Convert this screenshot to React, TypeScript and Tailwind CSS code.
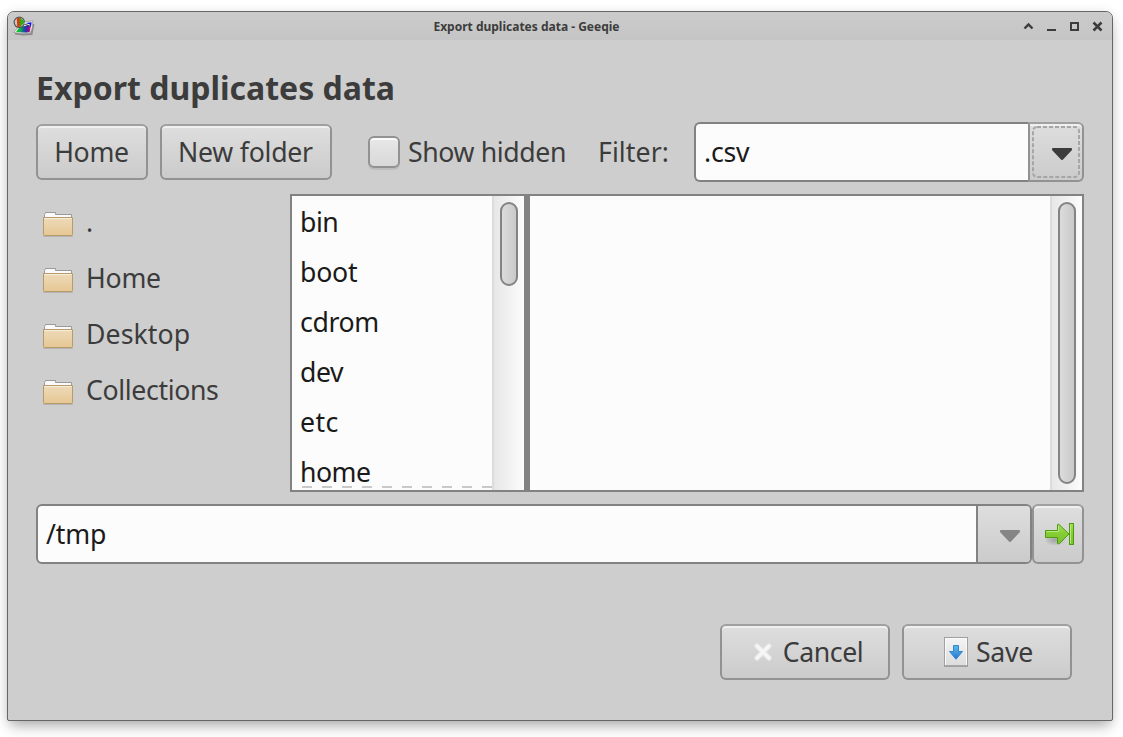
import type { ReactNode } from "react";

const raised =
  "border-2 border-[#929292] border-t-[#a0a0a0] rounded-[6px] bg-linear-to-b from-[#dedede] to-[#cbcbcb] shadow-[inset_0_2px_0_#f0f0f0]";

function Button({ className, children }: { className: string; children: ReactNode }) {
  return (
    <button type="button" className={`flex h-14 shrink-0 items-center justify-center whitespace-nowrap ${raised} ${className}`}>
      {children}
    </button>
  );
}

function AppIcon() {
  return (
    <svg width="22" height="20" viewBox="0 0 22 20" className="shrink-0">
      <defs>
        <linearGradient id="spectrum" x1="0" y1="0" x2="1" y2="0">
          <stop offset="0" stopColor="#14c81e" />
          <stop offset="0.3" stopColor="#0cae4a" />
          <stop offset="0.52" stopColor="#0c5c9c" />
          <stop offset="0.72" stopColor="#4a1cb0" />
          <stop offset="1" stopColor="#e6145a" />
        </linearGradient>
      </defs>
      <path d="M2 17.500 L10 18.500 L18.500 18 L20.500 8" fill="none" stroke="#6c6c6c" strokeWidth="2" opacity=".65" />
      <path d="M.5 16.500 L5 11.500 L12 6 L19.800 4.800 Q20 12 17.500 16.800 Q9 18.200 .5 16.500Z" fill="#ededed" stroke="#858585" strokeWidth=".6" />
      <path d="M3 15.700 L7 10.800 L18 9 L16.700 16 Q9 17.200 3 15.700Z" fill="url(#spectrum)" />
      <path d="M13 7 L18.600 6.200 L18 10.500 L14 10.500Z" fill="#1414dc" />
      <circle cx="6.300" cy="6.300" r="5.200" fill="#c9c9c4" stroke="#555" strokeWidth="1.200" />
      <path d="M3.800 2.300 L7.500 1.800 V11 L4.200 10.800Z" fill="#d8380c" />
      <path d="M7 1.800 L12 5.800 L7 11Z" fill="#1fb414" />
      <path d="M6.200 2 H7.600 V10.800 H6.200Z" fill="#8a7408" />
      <path d="M11 7.600 L17 9.800" stroke="#555" strokeWidth="1.400" />
      <path d="M11 7 L17 9" stroke="#dcdcdc" strokeWidth="1" />
    </svg>
  );
}

function WindowControls() {
  return (
    <svg width="82" height="12" viewBox="0 0 82 12" fill="none" stroke="#3c3c3c" strokeWidth="2" className="shrink-0">
      <path d="M1.500 8.500 L5.500 4.500 L9.500 8.500" strokeWidth="2.400" />
      <path d="M24 10 H33" />
      <rect x="48" y="3" width="7" height="7" />
      <path d="M70.500 2.500 L78.500 10.500 M78.500 2.500 L70.500 10.500" strokeWidth="2.500" />
    </svg>
  );
}

function FolderIcon() {
  return (
    <svg width="32" height="26" viewBox="0 0 32 26" className="mt-1 shrink-0">
      <defs>
        <linearGradient id="folder" x1="0" y1="0" x2="0" y2="1">
          <stop offset="0" stopColor="#eedabb" />
          <stop offset="1" stopColor="#e6c793" />
        </linearGradient>
      </defs>
      <path d="M1 24.500 H31" stroke="#b5b5b5" />
      <path d="M2.500 9 V2.500 L3.500 .5 H13.500 V2.500 H29.500 V9Z" fill="#fafafa" stroke="#999" />
      <path d="M1.500 5.500 H30.500 V22.500 Q30.500 23.500 29.500 23.500 H2.500 Q1.500 23.500 1.500 22.500Z" fill="url(#folder)" stroke="#b79b6b" />
      <path d="M2.500 6.500 H29.500" stroke="#f8edd9" />
    </svg>
  );
}

function Caret({ className }: { className: string }) {
  return (
    <svg width="20" height="12" viewBox="0 0 20 12" className={className}>
      <path d="M1 0 H19 Q20 0 20 1 V2 L11.500 11 Q10 12.800 8.500 11 L0 2 V1 Q0 0 1 0Z" fill="currentColor" />
    </svg>
  );
}

function FocusRing() {
  return (
    <svg width="48" height="52" viewBox="0 0 48 52" className="absolute top-[2px] left-[2px]">
      <rect x="1" y="1" width="46" height="50" rx="4" fill="none" stroke="#a6a6a6" strokeWidth="2" strokeDasharray="4 2" />
    </svg>
  );
}

function JumpIcon() {
  return (
    <svg width="34" height="26" viewBox="0 0 34 26" className="ml-1">
      <defs>
        <linearGradient id="jump" x1="0" y1="0" x2="0" y2="1">
          <stop offset="0" stopColor="#a0df55" />
          <stop offset="0.5" stopColor="#85cc33" />
          <stop offset="1" stopColor="#75c42a" />
        </linearGradient>
        <radialGradient id="jumpShade">
          <stop offset="0" stopColor="#777" stopOpacity=".55" />
          <stop offset="1" stopColor="#777" stopOpacity="0" />
        </radialGradient>
      </defs>
      <ellipse cx="12" cy="19" rx="11" ry="6" fill="url(#jumpShade)" />
      <path d="M2.500 9.500 H14.500 V3.500 Q15 2.800 16 3.500 L26 13 L16 22.800 Q15 23.200 14.500 22.500 V16.500 H2.500Z" fill="url(#jump)" stroke="#4f9a12" />
      <path d="M3.500 10.500 H15.500 V5" fill="none" stroke="#b9ea80" />
      <rect x="26.500" y="2.500" width="4" height="21" fill="url(#jump)" stroke="#4f9a12" />
      <path d="M27.500 3.500 V22.500" stroke="#b9ea80" />
    </svg>
  );
}

function CancelIcon() {
  return (
    <svg width="20" height="20" viewBox="0 0 20 20" fill="none" strokeLinecap="round">
      <path d="M4 4 L16 16 M16 4 L4 16" stroke="#e4e4e4" strokeWidth="5.500" />
      <path d="M4 4 L16 16 M16 4 L4 16" stroke="#f6f6f6" strokeWidth="3.200" />
    </svg>
  );
}

function SaveIcon() {
  return (
    <svg width="24" height="30" viewBox="0 0 24 30">
      <defs>
        <linearGradient id="paper" x1="0" y1="0" x2="0" y2="1">
          <stop offset="0" stopColor="#f4f4f4" />
          <stop offset="1" stopColor="#dcdcdc" />
        </linearGradient>
        <linearGradient id="down" x1="0" y1="0" x2="0" y2="1">
          <stop offset="0" stopColor="#55bdf0" />
          <stop offset="1" stopColor="#2b72cc" />
        </linearGradient>
      </defs>
      <rect x=".5" y=".5" width="23" height="29" fill="#fafafa" stroke="#a0a0a0" />
      <rect x="1.500" y="1.500" width="21" height="27" fill="url(#paper)" stroke="#fafafa" />
      <path d="M1 28.500 H23" stroke="#a8a8a8" />
      <path d="M9.500 8.500 H14.500 V14.500 H18.500 L12 22.300 L5.500 14.500 H9.500Z" fill="url(#down)" stroke="#3685cb" strokeLinejoin="round" />
    </svg>
  );
}

function Scrollbar({ thumb }: { thumb: string }) {
  return (
    <div className="w-8 shrink-0 self-stretch border-l-2 border-[#dcdcdc] bg-linear-to-r from-[#e7e7e7] to-[#fcfcfc] py-[6px] pl-[6px]">
      <div className={`w-[18px] rounded-full border-2 border-[#838383] bg-linear-to-r from-[#dcdcdc] to-[#c9c9c9] ${thumb}`} />
    </div>
  );
}

const bookmarks = [
  { name: ".", tracking: "" },
  { name: "Home", tracking: "tracking-[-0.25px]" },
  { name: "Desktop", tracking: "tracking-[0.08px]" },
  { name: "Collections", tracking: "tracking-[-0.36px]" },
];

const folders = [
  { name: "bin", tracking: "tracking-[-0.5px]" },
  { name: "boot", tracking: "tracking-[-0.25px]" },
  { name: "cdrom", tracking: "tracking-[-0.4px]" },
  { name: "dev", tracking: "tracking-[-0.4px]" },
  { name: "etc", tracking: "tracking-[0.4px]" },
  { name: "home", tracking: "tracking-[-0.5px]" },
];

export default function App() {
  return (
    <div className="h-[737px] w-[1123px] overflow-hidden bg-white pt-[11px] pl-[7px] font-['Noto_Sans',sans-serif] text-[26.67px] leading-9 text-[#3c3c3c]">
      <div className="flex h-[710px] w-[1106px] flex-col overflow-hidden rounded-t-[7px] rounded-b-[2px] border border-[#666] bg-[#cecece] shadow-[0_8px_14px_-3px_rgba(0,0,0,0.3),0_0_12px_rgba(0,0,0,0.08)]">
        <header className="grid h-7 shrink-0 grid-cols-[82px_1fr_82px] items-center bg-linear-to-b from-[#cbcbcb] to-[#c5c5c5] pr-[7px] pl-[5px]">
          <AppIcon />
          <h1 className="pt-[2px] pr-[65px] text-center text-[12px] leading-4 font-bold">Export duplicates data - Geeqie</h1>
          <WindowControls />
        </header>

        <main className="flex flex-col pr-7 pl-7">
          <h2 className="mt-[26px] h-11 text-[32px] leading-11 font-bold whitespace-nowrap">Export duplicates data</h2>

          <div className="mt-3 flex h-[60px] items-center">
            <Button className="w-28 pr-px tracking-[-0.3px]">Home</Button>
            <Button className="ml-3 w-[172px] pr-px tracking-[-0.25px]">New folder</Button>
            <label className="ml-9 flex items-center gap-2 whitespace-nowrap">
              <span className="size-8 rounded-[6px] border-2 border-[#929292] bg-linear-to-b from-[#e8e8e8] to-[#d8d8d8] shadow-[0_2px_0_#bdbdbd,inset_0_2px_0_#fafafa]" />
              <span className="w-[158px] tracking-[-0.38px]">Show hidden</span>
            </label>
            <span className="ml-8 w-24 tracking-[0.08px]">Filter:</span>
            <div className="flex h-[60px] w-[390px]">
              <div className="flex flex-1 items-center rounded-l-[6px] border-y-2 border-l-2 border-[#828282] bg-[#fcfcfc] pl-2 tracking-[-0.25px] text-[#1a1a1a]">.csv</div>
              <div className="relative flex w-14 items-center justify-center rounded-r-[6px] border-2 border-[#929292] border-t-[#a0a0a0] bg-linear-to-b from-[#dedede] to-[#cbcbcb] pt-1 pl-[12px] shadow-[inset_0_2px_0_#f0f0f0]">
                <FocusRing />
                <Caret className="text-[#3c3c3c]" />
              </div>
            </div>
          </div>

          <div className="mt-3 flex h-[298px]">
            <nav className="w-[254px] pt-px pl-[6px]">
              {bookmarks.map((b) => (
                <div key={b.name} className="flex h-14 items-center gap-3">
                  <FolderIcon />
                  <span className={`pb-[2px] ${b.tracking}`}>{b.name}</span>
                </div>
              ))}
            </nav>
            <section className="flex flex-1 border-2 border-[#828282] bg-[#fcfcfc] text-[#1a1a1a]">
              <div className="relative w-[200px] overflow-hidden pt-px pl-2">
                {folders.map((f) => (
                  <div key={f.name} className={`flex h-[50px] items-center ${f.tracking}`}>{f.name}</div>
                ))}
                <div className="absolute bottom-[2px] left-[10px] h-[2px] w-[190px] bg-[repeating-linear-gradient(90deg,#c9c9c9_0_10px,transparent_10px_20px)]" />
              </div>
              <Scrollbar thumb="h-[84px]" />
              <div className="w-[6px] bg-[#828282]" />
              <div className="flex-1" />
              <Scrollbar thumb="h-[282px]" />
            </section>
          </div>

          <div className="mt-3 flex h-[60px]">
            <div className="flex w-[996px] overflow-hidden rounded-[6px] border-2 border-[#828282] bg-[#fcfcfc]">
              <div className="flex w-[938px] items-center pl-2 tracking-[-0.15px] text-[#1a1a1a]">/tmp</div>
              <div className="flex flex-1 items-center justify-center border-l-2 border-[#828282] bg-linear-to-b from-[#dedede] to-[#cbcbcb] pt-1 pl-[12px]">
                <Caret className="text-[#858585]" />
              </div>
            </div>
            <button type="button" className={`flex w-[52px] items-center justify-center ${raised}`}>
              <JumpIcon />
            </button>
          </div>

          <footer className="mt-[60px] flex justify-end gap-3 pr-3">
            <Button className="w-[170px] gap-[10px] pl-[6px]">
              <CancelIcon />
              <span className="tracking-[-0.4px]">Cancel</span>
            </Button>
            <Button className="w-[170px] gap-2 pl-[3px]">
              <SaveIcon />
              <span className="tracking-[-0.3px]">Save</span>
            </Button>
          </footer>
        </main>
      </div>
    </div>
  );
}
